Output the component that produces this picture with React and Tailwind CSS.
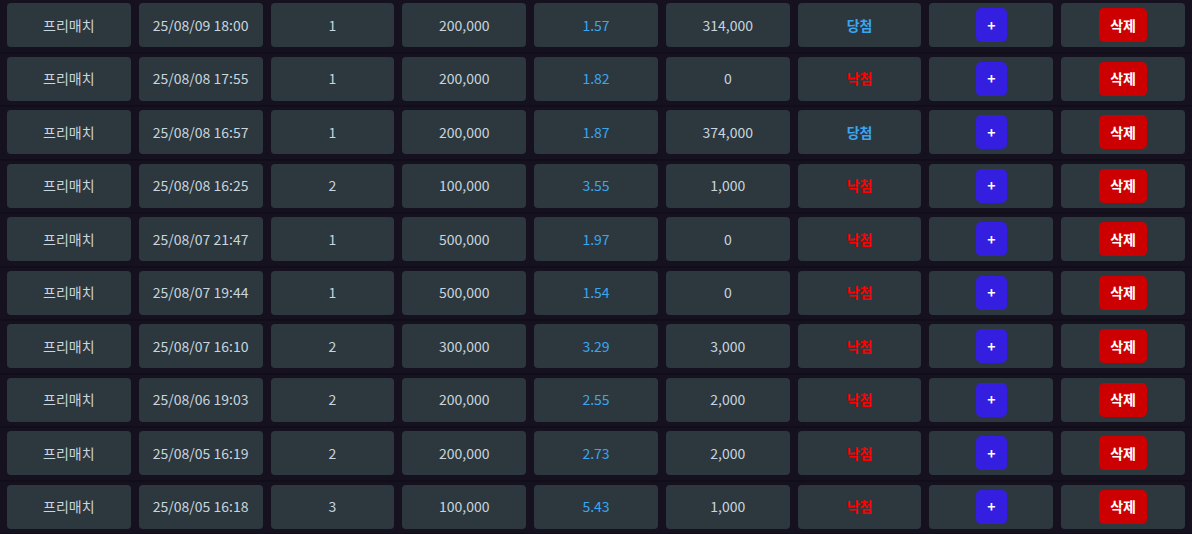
const rows = [
  ['25/08/09 18:00', '1', '200,000', '1.57', '314,000', true],
  ['25/08/08 17:55', '1', '200,000', '1.82', '0', false],
  ['25/08/08 16:57', '1', '200,000', '1.87', '374,000', true],
  ['25/08/08 16:25', '2', '100,000', '3.55', '1,000', false],
  ['25/08/07 21:47', '1', '500,000', '1.97', '0', false],
  ['25/08/07 19:44', '1', '500,000', '1.54', '0', false],
  ['25/08/07 16:10', '2', '300,000', '3.29', '3,000', false],
  ['25/08/06 19:03', '2', '200,000', '2.55', '2,000', false],
  ['25/08/05 16:19', '2', '200,000', '2.73', '2,000', false],
  ['25/08/05 16:18', '3', '100,000', '5.43', '1,000', false],
];

const Cell = ({ children, className = '' }) => (
  <div className={`h-[44px] rounded-[4px] bg-[#2d383e] flex items-center justify-center text-[14px] ${className}`}>
    {children}
  </div>
);

export default function App() {
  return (
    <div
      className="w-[1192px] h-[534px] overflow-hidden bg-[#16111f] text-[#c8d5df]"
      style={{ fontFamily: '"Noto Sans CJK KR", "Noto Sans", sans-serif' }}
    >
      {rows.map(([date, count, bet, odds, payout, won], i) => (
        <div
          key={i}
          className="h-[53.56px] pt-[3px] px-[7px] grid grid-cols-9 gap-x-[8px] items-start border-b-[2px] border-[#110d19]"
        >
          <Cell>프리매치</Cell>
          <Cell>{date}</Cell>
          <Cell>{count}</Cell>
          <Cell>{bet}</Cell>
          <Cell className="text-[#3aa6f2]">{odds}</Cell>
          <Cell>{payout}</Cell>
          <Cell className={`font-bold ${won ? 'text-[#3aa6f2]' : 'text-[#ff0000]'}`}>
            {won ? '당첨' : '낙첨'}
          </Cell>
          <Cell>
            <button
              type="button"
              className="w-[31px] h-[34px] rounded-[5px] bg-[#341ee0] text-white text-[14px] font-bold flex items-center justify-center"
            >
              +
            </button>
          </Cell>
          <Cell>
            <button
              type="button"
              className="w-[48px] h-[34px] rounded-[5px] bg-[#cc0000] text-white text-[14px] font-bold flex items-center justify-center"
            >
              삭제
            </button>
          </Cell>
        </div>
      ))}
    </div>
  );
}
